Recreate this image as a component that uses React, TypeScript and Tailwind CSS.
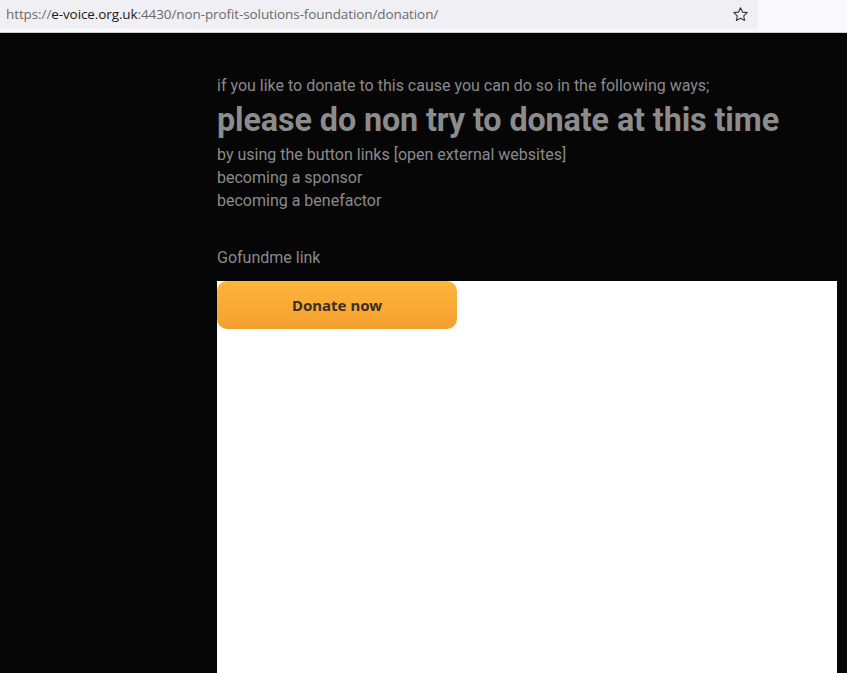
import React from "react";

export default function App() {
  return (
    <div className="w-[847px] h-[673px] overflow-hidden bg-[#060606] flex flex-col">
      <div className="h-[33px] flex bg-[#f9f9fb] border-b border-[#d0d0d4] shrink-0">
        <div className="w-[758px] h-[29px] bg-[#f0f0f4] rounded-br-[4px] flex items-center pl-[6px] pr-[8px]" style={{ fontFamily: '"Open Sans", "Noto Sans", sans-serif' }}>
          <div className="text-[13.5px] tracking-[-0.1px] text-[#6b6b6b] flex-1">
            https://<span className="text-[#1a1a1a]">e-voice.org.uk</span>:4430/non-profit-solutions-foundation/donation/
          </div>
          <svg width="17" height="17" viewBox="0 0 24 24" fill="none" stroke="#3a3a3a" strokeWidth="1.6" strokeLinejoin="round" className="mr-[1px]">
            <path d="M12 2.5l2.9 6.2 6.6.7-5 4.5 1.4 6.6L12 17.2l-5.9 3.3 1.4-6.6-5-4.5 6.6-.7z" />
          </svg>
        </div>
      </div>
      <div className="pl-[217px] pt-[41px] text-[#8a8a8a]" style={{ fontFamily: 'Roboto, "Liberation Sans", sans-serif' }}>
        <p className="text-[16px] leading-[23px]">if you like to donate to this cause you can do so in the following ways;</p>
        <h1 className="text-[32.3px] font-bold leading-[46px] text-[#8c8c8c] tracking-[-0.1px]">please do non try to donate at this time</h1>
        <p className="text-[16px] leading-[23px]">by using the button links [open external websites]</p>
        <p className="text-[16px] leading-[23px]">becoming a sponsor</p>
        <p className="text-[16px] leading-[23px]">becoming a benefactor</p>
        <p className="text-[16px] leading-[23px] mt-[34px]">Gofundme link</p>
        <div className="mt-[12px] w-[620px] h-[400px] bg-white">
          <button className="w-[240px] h-[48px] rounded-[10px] bg-gradient-to-b from-[#fdb53c] to-[#f69f2e] text-[#3a2f25] text-[15px] font-bold" style={{ fontFamily: '"Noto Sans", "Open Sans", sans-serif' }}>
            Donate now
          </button>
        </div>
      </div>
    </div>
  );
}
